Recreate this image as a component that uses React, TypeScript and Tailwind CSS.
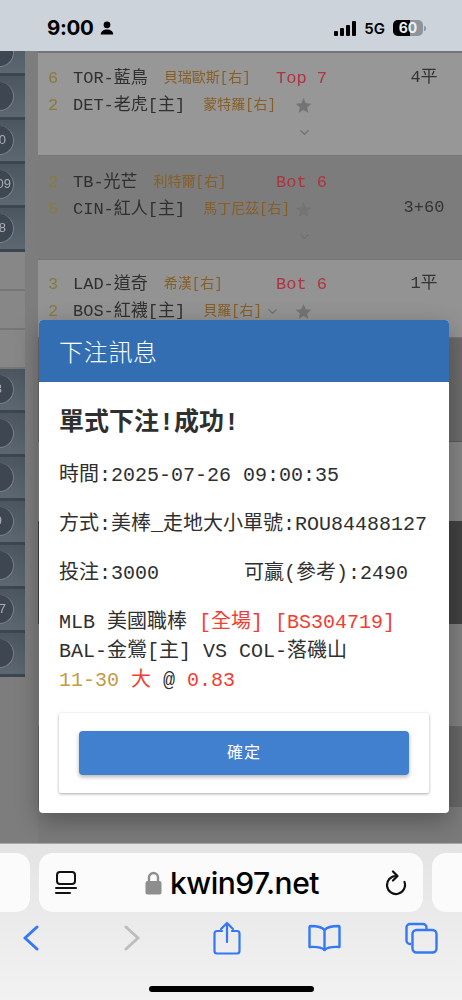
import React from "react";
import { ChevronDown } from "lucide-react";

const Star = () => (
  <svg width="17" height="17" viewBox="0 0 24 24" className="shrink-0">
    <path d="M12 1.500l3.200 7.200 7.800.8-5.900 5.200 1.700 7.700L12 18.400l-6.800 4 1.700-7.700L1 9.500l7.800-.8z" fill="#747474" />
  </svg>
);

type Game = {
  a: string; an: string; ap: string; b: string; bn: string; bp: string; inn: string; score: string;
  h: string; bg: string; pt: string; centered?: boolean; chevInline?: boolean;
};

const games: Game[] = [
  { a: "6", an: "TOR-藍鳥", ap: "貝瑞歐斯[右]", b: "2", bn: "DET-老虎[主]", bp: "蒙特羅[右]", inn: "Top 7", score: "4平", h: "h-[103px]", bg: "bg-[#979797]", pt: "pt-[12px]" },
  { a: "2", an: "TB-光芒", ap: "利特爾[右]", b: "5", bn: "CIN-紅人[主]", bp: "馬丁尼茲[右]", inn: "Bot 6", score: "3+60", h: "h-[104px]", bg: "bg-[#7c7c7c]", pt: "pt-[13px]", centered: true },
  { a: "3", an: "LAD-道奇", ap: "希漢[右]", b: "2", bn: "BOS-紅襪[主]", bp: "貝羅[右]", inn: "Bot 6", score: "1平", h: "h-[78px]", bg: "bg-[#939393]", pt: "pt-[11px]", chevInline: true },
];

function GameRow({ g }: { g: Game }) {
  return (
    <div className={`${g.h} ${g.bg} ${g.pt} relative flex shrink-0 border-b border-[#767676] pl-[10px] overflow-hidden`}>
      <div className="w-[346px] shrink-0 flex flex-col">
        <div className="flex h-[27px] items-center">
          <span className="w-[25px] shrink-0 text-[#867a40]">{g.a}</span>
          <div className="w-[203px] shrink-0 flex items-center gap-[16px] whitespace-nowrap">
            <span className="text-[#2f2f2f]">{g.an}</span>
            <span className="text-[14px] text-[#865e26]">{g.ap}</span>
          </div>
          <span className="text-[#ad3440] whitespace-pre">{g.inn}</span>
        </div>
        <div className="flex h-[27px] items-center">
          <span className="w-[25px] shrink-0 text-[#867a40]">{g.b}</span>
          <div className="w-[222px] shrink-0 flex items-center gap-[18px] whitespace-nowrap">
            <span className="text-[#2f2f2f]">{g.bn}</span>
            <span className="text-[14px] text-[#865e26]">{g.bp}</span>
            {g.chevInline && <ChevronDown size={15} className="-ml-[15px] text-[#6f6f6f]" />}
          </div>
          <Star />
        </div>
        {!g.chevInline && (
          <div className="flex pl-[249px] pt-[6px]">
            <ChevronDown size={15} className="text-[#6f6f6f]" />
          </div>
        )}
      </div>
      <div className={`w-[60px] text-center text-[#333] ${g.centered ? "self-center -mt-[12px]" : "mt-[0px]"}`}>{g.score}</div>
    </div>
  );
}

function Tile({ t, pr }: { t: string; pr: string }) {
  return (
    <div className="h-[44px] shrink-0 flex items-center border-b-[3px] border-[#3c4650] bg-gradient-to-b from-[#4b5661] to-[#5c6772] overflow-hidden">
      <div className={`${pr} -ml-[15px] w-[29px] h-[29px] shrink-0 rounded-full bg-[#3d4651] border-b border-r border-[#79818a] flex items-center justify-end text-[13px] text-[#a9aeb3] font-['Liberation_Sans',sans-serif]`}>
        {t}
      </div>
    </div>
  );
}

function StatusBar() {
  return (
    <div className="h-[51px] shrink-0 bg-[#ccd3db] flex items-center pl-[47px] pr-[36px] pt-[5px] font-['Inter',sans-serif] text-black">
      <span className="text-[20.5px] font-bold leading-none tracking-[-0.3px]">9:00</span>
      <svg width="14" height="14" viewBox="0 0 14 14" className="ml-[6px]">
        <circle cx="7" cy="3.800" r="3.400" fill="#000" />
        <path d="M0.800 13.500c0-3.400 2.800-5 6.200-5s6.200 1.600 6.200 5z" fill="#000" />
      </svg>
      <div className="ml-auto flex items-end gap-[2px] h-[15px]">
        <div className="w-[4px] h-[5px] bg-black rounded-[1px]" />
        <div className="w-[4px] h-[8px] bg-black rounded-[1px]" />
        <div className="w-[4px] h-[11px] bg-black rounded-[1px]" />
        <div className="w-[4px] h-[15px] bg-black rounded-[1px]" />
      </div>
      <span className="ml-[8px] text-[15px] font-semibold leading-none">5G</span>
      <div className="ml-[8px] relative w-[30px] h-[16px] rounded-[5px] overflow-hidden bg-[#8e949d] flex">
        <div className="w-[17px] bg-black" />
        <span className="absolute inset-0 flex items-center justify-center text-[14px] font-bold text-[#eef0f2] leading-none">60</span>
      </div>
      <div className="ml-[1px] w-[2px] h-[5px] rounded-r-sm bg-[#8e949d]" />
    </div>
  );
}

function BottomBar() {
  return (
    <div className="h-[157px] shrink-0 border-t border-[#a8a8a8] bg-gradient-to-b from-[#e4e4e4] to-[#f2f2f2] flex flex-col relative overflow-hidden">
      <div className="flex justify-center gap-[9px] mt-[9px] h-[59px]">
        <div className="w-[100px] shrink-0 rounded-[14px] bg-[#fbfbfb]" />
        <div className="w-[384px] shrink-0 rounded-[14px] bg-[#fbfbfb] flex items-center px-[16px]">
          <svg width="22" height="25" viewBox="0 0 22 25" fill="none" stroke="#111" strokeWidth="2" strokeLinecap="round">
            <rect x="2" y="2" width="18" height="12" rx="3" />
            <path d="M1 18h20M1 23h14" />
          </svg>
          <div className="flex-1 flex items-center justify-center gap-[8px] pl-[4px] pr-[2px]">
            <svg width="17" height="24" viewBox="0 0 17 24">
              <path d="M4 11V6.500a4.500 4.500 0 0 1 9 0V11" fill="none" stroke="#8e8e8e" strokeWidth="2.400" />
              <rect x="0.500" y="10" width="16" height="13.500" rx="2" fill="#8e8e8e" />
            </svg>
            <span className="text-[30px] font-medium text-black leading-none font-['Inter',sans-serif] tracking-[-0.5px]">kwin97.net</span>
          </div>
          <svg width="22" height="26" viewBox="0 0 22 26" fill="none" stroke="#111" strokeWidth="2.200" strokeLinecap="round" strokeLinejoin="round">
            <path d="M11 6A9 9 0 1 0 19.500 12" />
            <path d="M8 1.500l4.500 4.500L8 10.500" />
          </svg>
        </div>
        <div className="w-[100px] shrink-0 rounded-[14px] bg-[#fbfbfb]" />
      </div>
      <div className="mt-[9px] h-[34px] pl-[22px] flex items-center">
        <svg width="18" height="26" viewBox="0 0 18 26" fill="none" stroke="#3478f6" strokeWidth="3" strokeLinecap="round" strokeLinejoin="round">
          <path d="M15 2L3 13l12 11" />
        </svg>
        <svg width="18" height="26" viewBox="0 0 18 26" fill="none" stroke="#bdbdbd" strokeWidth="3" strokeLinecap="round" strokeLinejoin="round" className="ml-[83px]">
          <path d="M3 2l12 11L3 24" />
        </svg>
        <svg width="28" height="34" viewBox="0 0 28 34" fill="none" stroke="#3478f6" strokeWidth="2.200" strokeLinecap="round" strokeLinejoin="round" className="ml-[72px]">
          <path d="M9 10H4a2.500 2.500 0 0 0-2.500 2.500v17.500a2.500 2.500 0 0 0 2.500 2.500h20a2.500 2.500 0 0 0 2.500-2.500V12.500A2.500 2.500 0 0 0 24 10h-5" />
          <path d="M14 21V2M8 8l6-6 6 6" />
        </svg>
        <svg width="33" height="28" viewBox="0 0 33 28" fill="none" stroke="#3478f6" strokeWidth="2.400" strokeLinecap="round" strokeLinejoin="round" className="ml-[67px]">
          <path d="M16.500 6C14 3 10 2 2.500 2A1 1 0 0 0 1.500 3v20c7-.5 12 0 15 3 3-3 8-3.500 15-3V3a1 1 0 0 0-1-1C23 2 19 3 16.500 6z" />
          <path d="M16.500 6v20" />
        </svg>
        <svg width="33" height="32" viewBox="0 0 33 32" fill="none" stroke="#3478f6" strokeWidth="2.400" strokeLinejoin="round" className="ml-[64px]">
          <path d="M6 22H5a3.500 3.500 0 0 1-3.500-3.500v-13A3.500 3.500 0 0 1 5 2h13a3.500 3.500 0 0 1 3.500 3.500V8" />
          <rect x="7.500" y="8" width="24" height="22.500" rx="4" />
        </svg>
      </div>
      <div className="mt-[31px] ml-[149px] w-[165px] h-[6px] rounded-full bg-black" />
    </div>
  );
}

function Modal() {
  return (
    <div className="absolute left-[39px] top-[320px] w-[410px] h-[493px] rounded-[4px] bg-white shadow-[0_8px_24px_rgba(0,0,0,0.3)] overflow-hidden font-['Liberation_Mono','Noto_Sans_CJK_TC',monospace] text-[#2f2f2f] flex flex-col">
      <div className="h-[62px] shrink-0 bg-[#336eb2] flex items-center pl-[20px] text-[24px] tracking-[0.7px] text-white font-['Noto_Sans_CJK_TC',sans-serif] font-light">
        下注訊息
      </div>
      <div className="flex-1 flex flex-col px-[20px] pt-[27px]">
        <div className="h-[30px] leading-[30px] text-[25px] font-bold whitespace-nowrap">單式下注!成功!</div>
        <div className="mt-[22px] flex flex-col gap-[20px] text-[20px] leading-[29px] whitespace-pre">
          <div className="h-[29px]">時間:2025-07-26 09:00:35</div>
          <div className="h-[29px]">方式:美棒_走地大小單號:ROU84488127</div>
          <div className="h-[29px] flex">
            <span className="w-[185px]">投注:3000</span>
            <span>可贏(參考):2490</span>
          </div>
          <div className="flex flex-col">
            <div className="h-[29px]">MLB 美國職棒 <span className="text-[#f23d32]">[全場] [BS304719]</span></div>
            <div className="h-[29px]">BAL-金鶯[主] VS COL-落磯山</div>
            <div className="h-[29px]">
              <span className="text-[#c29b45]">11-30 </span>
              <span className="text-[#f23d32]">大 </span>
              <span>@ </span>
              <span className="text-[#f23d32]">0.83</span>
            </div>
          </div>
        </div>
        <div className="mt-[18px] h-[80px] rounded-[2px] bg-white shadow-[0_1px_3px_rgba(0,0,0,0.35)] py-[18px] px-[20px] shrink-0">
          <button className="w-full h-[44px] rounded-[4px] bg-[#4080cf] shadow-[0_2px_4px_rgba(0,0,0,0.3)] text-white text-[16px] tracking-[1px] font-normal font-['Noto_Sans_CJK_TC',sans-serif] pb-[4px]">
            確定
          </button>
        </div>
      </div>
    </div>
  );
}

export default function App() {
  const topTiles = [
    { t: "", pr: "pr-[7px]" }, { t: "", pr: "pr-[7px]" }, { t: "0", pr: "pr-[7px]" }, { t: "09", pr: "pr-[2px]" }, { t: "8", pr: "pr-[7px]" },
  ];
  const lowTiles = [
    { t: "8", pr: "pr-[11px]" }, { t: "", pr: "pr-[7px]" }, { t: "", pr: "pr-[7px]" }, { t: "9", pr: "pr-[11px]" }, { t: "", pr: "pr-[7px]" }, { t: "7", pr: "pr-[7px]" }, { t: "", pr: "pr-[7px]" },
  ];
  return (
    <div className="relative w-[462px] h-[1000px] overflow-hidden flex flex-col bg-[#7f7f7f]">
      <StatusBar />
      <div className="h-[792px] shrink-0 flex overflow-hidden bg-[#7d7d7d] blur-[0.4px]">
        <div className="w-[25px] shrink-0 flex flex-col">
          <div className="-mt-[19px] flex flex-col">
            {topTiles.map((x, i) => (
              <Tile key={i} t={x.t} pr={x.pr} />
            ))}
          </div>
          {[0, 1, 2].map((i) => (
            <div key={i} className="h-[39px] shrink-0 bg-[#878787] border-b-2 border-[#767676]" />
          ))}
          {lowTiles.map((x, i) => (
            <Tile key={i} t={x.t} pr={x.pr} />
          ))}
        </div>
        <div className="ml-[13px] flex-1 min-w-0 flex flex-col font-['Liberation_Mono','Noto_Sans_CJK_TC',monospace] text-[17px]">
          <div className="h-[2px] shrink-0 bg-[#757575]" />
          {games.map((g, i) => (
            <GameRow key={i} g={g} />
          ))}
          <div className="h-[104px] shrink-0 bg-[#6b6b6b] border-b border-[#5c5c5c]" />
          <div className="h-[79px] shrink-0 bg-[#858585]" />
          <div className="h-[103px] shrink-0 bg-[#414141]" />
          <div className="h-[103px] shrink-0 bg-[#808080] border-b border-[#6a6a6a]" />
          <div className="h-[80px] shrink-0 bg-[#676767]" />
          <div className="flex-1 bg-[#7a7a7a]" />
        </div>
      </div>
      <BottomBar />
      <Modal />
    </div>
  );
}
